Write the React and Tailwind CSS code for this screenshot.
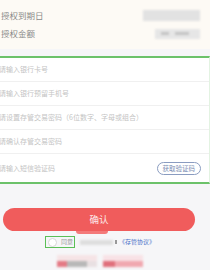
import React from 'react';

const fields = [
  '请输入银行卡号',
  '请输入银行预留手机号',
  '请设置存管交易密码（6位数字、字母或组合）',
  '请确认存管交易密码',
];

export default function App() {
  return (
    <div className="w-[210px] h-[270px] overflow-hidden bg-[#f6f6f8]" style={{ fontFamily: '"Noto Sans CJK SC", "Noto Sans", sans-serif' }}>
      {/* Authorization info */}
      <div className="h-[49px] bg-[#fdfaf5] flex flex-col justify-center gap-[6px] pl-[1px] pr-[10px]">
        <div className="flex items-center justify-between h-[12px]">
          <span className="text-[8.5px] leading-none text-[#8a8a8a]">授权到期日</span>
          <div className="w-[57px] h-[11px] bg-[#e2e2e2] blur-[1px]" />
        </div>
        <div className="flex items-center justify-between h-[12px]">
          <span className="text-[8.5px] leading-none text-[#8a8a8a]">授权金额</span>
          <div className="w-[45px] h-[10px] bg-[#e6e6e6] blur-[1px] flex items-center gap-[6px] px-[6px]">
            <div className="w-[8px] h-[3px] bg-[#c4c4c4]" />
            <div className="w-[14px] h-[3px] bg-[#c4c4c4]" />
          </div>
        </div>
      </div>
      <div className="h-[7px]" />

      {/* Form */}
      <div className="bg-white border-y-2 border-[#6cc26a] border-r border-r-[#e3f3e2]">
        {fields.map((f) => (
          <div key={f} className="h-[24px] flex items-center border-b border-[#f0f0f0]">
            <span className="text-[7px] leading-none text-[#c4c4c4] -ml-[1px]">{f}</span>
          </div>
        ))}
        <div className="h-[28px] flex items-center justify-between pr-[8px]">
          <span className="text-[7px] leading-none text-[#c4c4c4] -ml-[1px]">请输入短信验证码</span>
          <div className="h-[13px] px-[5px] rounded-full border border-[#8a9cc0] flex items-center">
            <span className="text-[6.5px] leading-none text-[#7d8fb4]">获取验证码</span>
          </div>
        </div>
      </div>

      {/* Confirm */}
      <div className="pt-[20px] px-[3px] pr-[15px]">
        <button className="w-full h-[23px] rounded-full bg-[#f05c5c] text-[#fdeaea] text-[9.5px] font-normal leading-none">确认</button>
        <div className="ml-[73px] w-[32px] h-[3px] bg-[#f47a7a] rounded-b-full" />
      </div>
      <div className="flex items-center mt-[2px] ml-[45px] h-[12px]">
        <div className="h-[12px] w-[30px] border border-[#5bbf57] flex items-center gap-[4px] pl-[2px]">
          <div className="w-[9px] h-[9px] rounded-full border border-[#d8d8d8] bg-white" />
          <span className="text-[6px] leading-none text-[#999]">同意</span>
        </div>
        <div className="ml-[5px] w-[33px] h-[5px] bg-[#dedede] blur-[0.8px]" />
        <div className="ml-[2px] w-[2px] h-[4px] bg-[#999]" />
        <span className="ml-[2px] text-[6px] leading-none text-[#4a72c8]">《存管协议》</span>
      </div>

      {/* Blurred footer */}
      <div className="flex gap-[6px] ml-[57px] mt-[7px]">
        <div className="w-[40px] h-[14px] flex flex-col blur-[0.8px]">
          <div className="h-[6px] bg-[#f6e4e6]" />
          <div className="h-[6px] flex">
            <div className="w-[10px] bg-[#e47a85]" />
            <div className="w-[20px] bg-[#b8b8b8]" />
            <div className="w-[10px] bg-[#e8e0e2]" />
          </div>
        </div>
        <div className="w-[40px] h-[14px] flex flex-col blur-[0.8px]">
          <div className="h-[6px] bg-[#f8e2e6]" />
          <div className="h-[6px] flex">
            <div className="w-[12px] bg-[#e0707c]" />
            <div className="w-[28px] bg-[#f0a8b0]" />
          </div>
        </div>
      </div>
    </div>
  );
}
